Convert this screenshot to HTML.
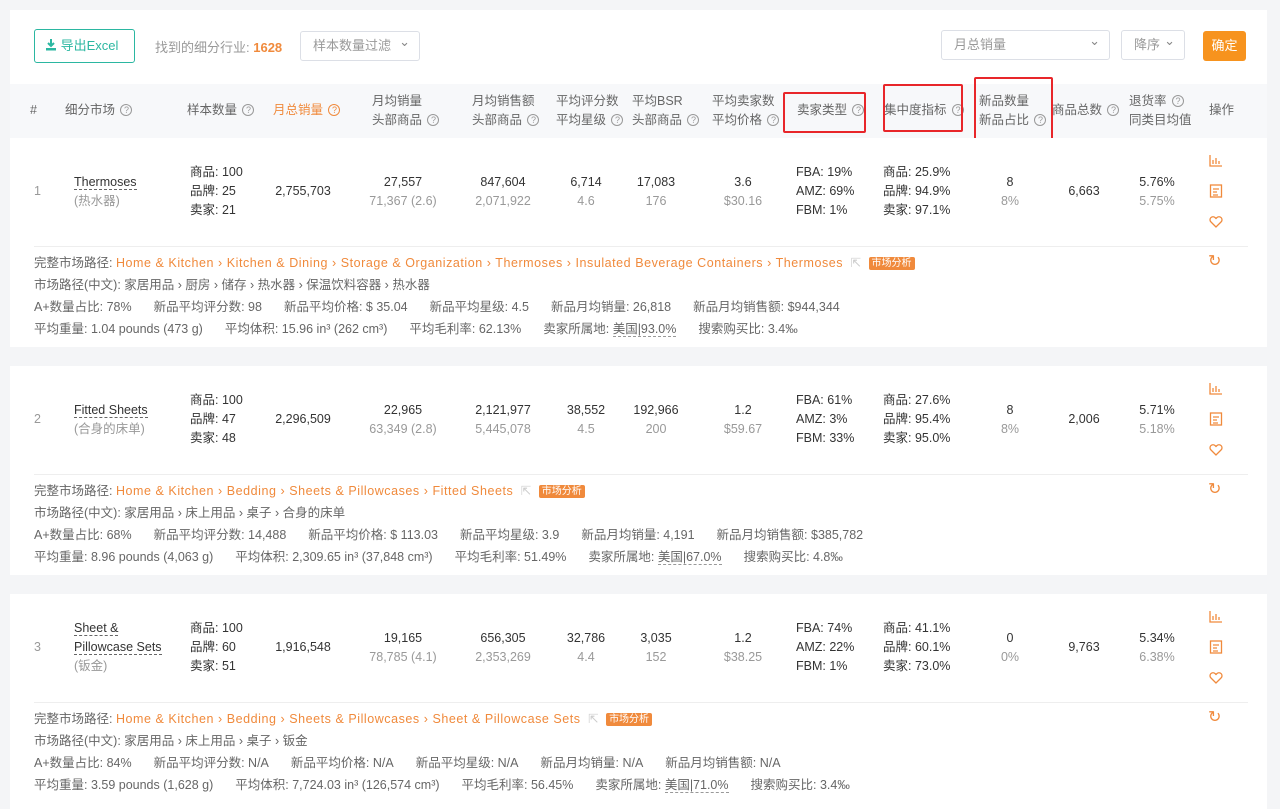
<!DOCTYPE html>
<html><head><meta charset="utf-8"><style>
*{margin:0;padding:0;box-sizing:border-box}
body{width:1280px;height:804px;background:#f4f5f7;font-family:"Liberation Sans","Noto Sans CJK SC",sans-serif;font-size:12.5px;color:#333;position:relative;overflow:hidden}
.a{position:absolute;white-space:nowrap}
.c{transform:translateX(-50%);text-align:center}
.g{color:#999}
.o{color:#f08a3c}
.q{display:inline-block;width:12px;height:12px;border:1px solid #999;border-radius:50%;font-size:9px;line-height:10px;text-align:center;color:#999;vertical-align:1px;margin-left:2px}
.card{position:absolute;left:10px;width:1257px;background:#fff}
.row{position:absolute;left:10px;width:1257px;height:209px;background:#fff}
.row .a{line-height:19px}
.hd{color:#666;line-height:19px}
.red{position:absolute;border:2px solid #e8262a;border-radius:2px}
.sel{position:absolute;border:1px solid #dcdfe6;border-radius:3px;background:#fff;color:#999;font-size:13px;padding-left:12px;line-height:28px}
.sel:after{content:"⌄";position:absolute;right:9px;top:-4px;color:#888}
.det{color:#666;font-size:12.5px}
.det span{margin-right:22px}
.det .o{letter-spacing:0.55px}
.tag{background:#f08a3c;color:#fff;font-size:10px;padding:0 3px;border-radius:2px;line-height:13px;display:inline-block;vertical-align:1px}
.ul{border-bottom:1px dashed #999}
</style></head><body>
<div class="card" style="top:10px;height:337px"></div>
<div class="a" style="left:34px;top:29px;width:101px;height:34px;border:1px solid #2bb7a1;border-radius:3px;color:#2bb7a1;font-size:13px;line-height:32px;padding-left:10px">
<svg width="12" height="13" viewBox="0 0 12 13" style="vertical-align:-1px"><path d="M6 1v7M3 5l3 3 3-3" stroke="#2bb7a1" stroke-width="2" fill="none"/><rect x="1" y="10" width="10" height="2.5" fill="#2bb7a1"/></svg> 导出Excel</div>
<div class="a g" style="left:155px;top:37px;font-size:13px">找到的细分行业: <b class="o" style="font-weight:bold">1628</b></div>
<div class="sel" style="left:300px;top:31px;width:120px;height:30px">样本数量过滤</div>
<div class="sel" style="left:941px;top:30px;width:169px;height:30px">月总销量</div>
<div class="sel" style="left:1121px;top:30px;width:64px;height:30px">降序</div>
<div class="a" style="left:1203px;top:31px;width:43px;height:30px;background:#f7931e;border-radius:3px;color:#fff;font-size:13px;line-height:30px;text-align:center">确定</div>
<div class="a" style="left:10px;top:84px;width:1257px;height:54px;background:#f7f8fa"></div>
<div class="a hd" style="left:30px;top:101px">#</div>
<div class="a hd" style="left:65px;top:101px">细分市场 <span class="q">?</span></div>
<div class="a hd" style="left:187px;top:101px">样本数量 <span class="q">?</span></div>
<div class="a hd o" style="left:273px;top:101px;color:#f08a3c">月总销量 <span class="q" style="border-color:#f08a3c;color:#f08a3c">?</span></div>
<div class="a hd" style="left:372px;top:92px">月均销量<br>头部商品 <span class="q">?</span></div>
<div class="a hd" style="left:472px;top:92px">月均销售额<br>头部商品 <span class="q">?</span></div>
<div class="a hd" style="left:556px;top:92px">平均评分数<br>平均星级 <span class="q">?</span></div>
<div class="a hd" style="left:632px;top:92px">平均BSR<br>头部商品 <span class="q">?</span></div>
<div class="a hd" style="left:712px;top:92px">平均卖家数<br>平均价格 <span class="q">?</span></div>
<div class="a hd" style="left:797px;top:101px">卖家类型 <span class="q">?</span></div>
<div class="a hd" style="left:884px;top:101px">集中度指标 <span class="q">?</span></div>
<div class="a hd" style="left:979px;top:92px">新品数量<br>新品占比 <span class="q">?</span></div>
<div class="a hd" style="left:1052px;top:101px">商品总数 <span class="q">?</span></div>
<div class="a hd" style="left:1129px;top:92px">退货率 <span class="q">?</span><br>同类目均值</div>
<div class="a hd" style="left:1209px;top:101px">操作</div>
<div class="red" style="left:783px;top:92px;width:83px;height:41px"></div>
<div class="red" style="left:883px;top:84px;width:80px;height:48px"></div>
<div class="red" style="left:974px;top:77px;width:79px;height:67px"></div>

<div class="row" style="top:138px">
<div class="a g" style="left:24px;top:44px">1</div>
<div class="a" style="left:64px;top:35px"><span class="ul" style="border-color:#666">Thermoses</span><br><span class="g">(热水器)</span></div>
<div class="a" style="left:180px;top:25px">商品: 100<br>品牌: 25<br>卖家: 21</div>
<div class="a c" style="left:293px;top:44px">2,755,703</div>
<div class="a c" style="left:393px;top:35px">27,557<br><span class="g">71,367 (2.6)</span></div>
<div class="a c" style="left:493px;top:35px">847,604<br><span class="g">2,071,922</span></div>
<div class="a c" style="left:576px;top:35px">6,714<br><span class="g">4.6</span></div>
<div class="a c" style="left:646px;top:35px">17,083<br><span class="g">176</span></div>
<div class="a c" style="left:733px;top:35px">3.6<br><span class="g">$30.16</span></div>
<div class="a" style="left:786px;top:25px">FBA: 19%<br>AMZ: 69%<br>FBM: 1%</div>
<div class="a" style="left:873px;top:25px">商品: 25.9%<br>品牌: 94.9%<br>卖家: 97.1%</div>
<div class="a c" style="left:1000px;top:35px">8<br><span class="g">8%</span></div>
<div class="a c" style="left:1074px;top:44px">6,663</div>
<div class="a c" style="left:1147px;top:35px">5.76%<br><span class="g">5.75%</span></div>
<svg class="a" style="left:1199px;top:16px" width="14" height="80" viewBox="0 0 14 80" fill="none" stroke="#f08a3c" stroke-width="1.3"><path d="M1 1v11h12M4 10V6M7 10V4M10 10V7"/><rect x="1.5" y="31" width="11" height="12"/><path d="M4 35h6M4 38h4M4 41h5"/><path d="M7 73l-5-5a3 3 0 014-4.5l1 1 1-1a3 3 0 014 4.5z"/></svg>
<div class="a" style="left:24px;top:108px;width:1214px;height:1px;background:#eee"></div>
<div class="a det" style="left:24px;top:116px">完整市场路径: <span class="o" style="margin:0">Home &amp; Kitchen › Kitchen &amp; Dining › Storage &amp; Organization › Thermoses › Insulated Beverage Containers › Thermoses</span> <span style="color:#ccc;margin:0 4px">⇱</span> <span class="tag" style="margin:0">市场分析</span></div>
<div class="a det" style="left:24px;top:138px">市场路径(中文): 家居用品 › 厨房 › 储存 › 热水器 › 保温饮料容器 › 热水器</div>
<div class="a det" style="left:24px;top:160px"><span>A+数量占比: 78%</span><span>新品平均评分数: 98</span><span>新品平均价格: $ 35.04</span><span>新品平均星级: 4.5</span><span>新品月均销量: 26,818</span><span>新品月均销售额: $944,344</span></div>
<div class="a det" style="left:24px;top:182px"><span>平均重量: 1.04 pounds (473 g)</span><span>平均体积: 15.96 in³ (262 cm³)</span><span>平均毛利率: 62.13%</span><span>卖家所属地: <i class="ul" style="font-style:normal">美国|93.0%</i></span><span>搜索购买比: 3.4‰</span></div>
<div class="a o" style="left:1198px;top:114px;font-size:16px">↻</div>
</div>

<div class="row" style="top:366px">
<div class="a g" style="left:24px;top:44px">2</div>
<div class="a" style="left:64px;top:35px"><span class="ul" style="border-color:#666">Fitted Sheets</span><br><span class="g">(合身的床单)</span></div>
<div class="a" style="left:180px;top:25px">商品: 100<br>品牌: 47<br>卖家: 48</div>
<div class="a c" style="left:293px;top:44px">2,296,509</div>
<div class="a c" style="left:393px;top:35px">22,965<br><span class="g">63,349 (2.8)</span></div>
<div class="a c" style="left:493px;top:35px">2,121,977<br><span class="g">5,445,078</span></div>
<div class="a c" style="left:576px;top:35px">38,552<br><span class="g">4.5</span></div>
<div class="a c" style="left:646px;top:35px">192,966<br><span class="g">200</span></div>
<div class="a c" style="left:733px;top:35px">1.2<br><span class="g">$59.67</span></div>
<div class="a" style="left:786px;top:25px">FBA: 61%<br>AMZ: 3%<br>FBM: 33%</div>
<div class="a" style="left:873px;top:25px">商品: 27.6%<br>品牌: 95.4%<br>卖家: 95.0%</div>
<div class="a c" style="left:1000px;top:35px">8<br><span class="g">8%</span></div>
<div class="a c" style="left:1074px;top:44px">2,006</div>
<div class="a c" style="left:1147px;top:35px">5.71%<br><span class="g">5.18%</span></div>
<svg class="a" style="left:1199px;top:16px" width="14" height="80" viewBox="0 0 14 80" fill="none" stroke="#f08a3c" stroke-width="1.3"><path d="M1 1v11h12M4 10V6M7 10V4M10 10V7"/><rect x="1.5" y="31" width="11" height="12"/><path d="M4 35h6M4 38h4M4 41h5"/><path d="M7 73l-5-5a3 3 0 014-4.5l1 1 1-1a3 3 0 014 4.5z"/></svg>
<div class="a" style="left:24px;top:108px;width:1214px;height:1px;background:#eee"></div>
<div class="a det" style="left:24px;top:116px">完整市场路径: <span class="o" style="margin:0">Home &amp; Kitchen › Bedding › Sheets &amp; Pillowcases › Fitted Sheets</span> <span style="color:#ccc;margin:0 4px">⇱</span> <span class="tag" style="margin:0">市场分析</span></div>
<div class="a det" style="left:24px;top:138px">市场路径(中文): 家居用品 › 床上用品 › 桌子 › 合身的床单</div>
<div class="a det" style="left:24px;top:160px"><span>A+数量占比: 68%</span><span>新品平均评分数: 14,488</span><span>新品平均价格: $ 113.03</span><span>新品平均星级: 3.9</span><span>新品月均销量: 4,191</span><span>新品月均销售额: $385,782</span></div>
<div class="a det" style="left:24px;top:182px"><span>平均重量: 8.96 pounds (4,063 g)</span><span>平均体积: 2,309.65 in³ (37,848 cm³)</span><span>平均毛利率: 51.49%</span><span>卖家所属地: <i class="ul" style="font-style:normal">美国|67.0%</i></span><span>搜索购买比: 4.8‰</span></div>
<div class="a o" style="left:1198px;top:114px;font-size:16px">↻</div>
</div>

<div class="row" style="top:594px;height:215px">
<div class="a g" style="left:24px;top:44px">3</div>
<div class="a" style="left:64px;top:25px"><span class="ul" style="border-color:#666">Sheet &amp;</span><br><span class="ul" style="border-color:#666">Pillowcase Sets</span><br><span class="g">(钣金)</span></div>
<div class="a" style="left:180px;top:25px">商品: 100<br>品牌: 60<br>卖家: 51</div>
<div class="a c" style="left:293px;top:44px">1,916,548</div>
<div class="a c" style="left:393px;top:35px">19,165<br><span class="g">78,785 (4.1)</span></div>
<div class="a c" style="left:493px;top:35px">656,305<br><span class="g">2,353,269</span></div>
<div class="a c" style="left:576px;top:35px">32,786<br><span class="g">4.4</span></div>
<div class="a c" style="left:646px;top:35px">3,035<br><span class="g">152</span></div>
<div class="a c" style="left:733px;top:35px">1.2<br><span class="g">$38.25</span></div>
<div class="a" style="left:786px;top:25px">FBA: 74%<br>AMZ: 22%<br>FBM: 1%</div>
<div class="a" style="left:873px;top:25px">商品: 41.1%<br>品牌: 60.1%<br>卖家: 73.0%</div>
<div class="a c" style="left:1000px;top:35px">0<br><span class="g">0%</span></div>
<div class="a c" style="left:1074px;top:44px">9,763</div>
<div class="a c" style="left:1147px;top:35px">5.34%<br><span class="g">6.38%</span></div>
<svg class="a" style="left:1199px;top:16px" width="14" height="80" viewBox="0 0 14 80" fill="none" stroke="#f08a3c" stroke-width="1.3"><path d="M1 1v11h12M4 10V6M7 10V4M10 10V7"/><rect x="1.5" y="31" width="11" height="12"/><path d="M4 35h6M4 38h4M4 41h5"/><path d="M7 73l-5-5a3 3 0 014-4.5l1 1 1-1a3 3 0 014 4.5z"/></svg>
<div class="a" style="left:24px;top:108px;width:1214px;height:1px;background:#eee"></div>
<div class="a det" style="left:24px;top:116px">完整市场路径: <span class="o" style="margin:0">Home &amp; Kitchen › Bedding › Sheets &amp; Pillowcases › Sheet &amp; Pillowcase Sets</span> <span style="color:#ccc;margin:0 4px">⇱</span> <span class="tag" style="margin:0">市场分析</span></div>
<div class="a det" style="left:24px;top:138px">市场路径(中文): 家居用品 › 床上用品 › 桌子 › 钣金</div>
<div class="a det" style="left:24px;top:160px"><span>A+数量占比: 84%</span><span>新品平均评分数: N/A</span><span>新品平均价格: N/A</span><span>新品平均星级: N/A</span><span>新品月均销量: N/A</span><span>新品月均销售额: N/A</span></div>
<div class="a det" style="left:24px;top:182px"><span>平均重量: 3.59 pounds (1,628 g)</span><span>平均体积: 7,724.03 in³ (126,574 cm³)</span><span>平均毛利率: 56.45%</span><span>卖家所属地: <i class="ul" style="font-style:normal">美国|71.0%</i></span><span>搜索购买比: 3.4‰</span></div>
<div class="a o" style="left:1198px;top:114px;font-size:16px">↻</div>
</div>
</body></html>
